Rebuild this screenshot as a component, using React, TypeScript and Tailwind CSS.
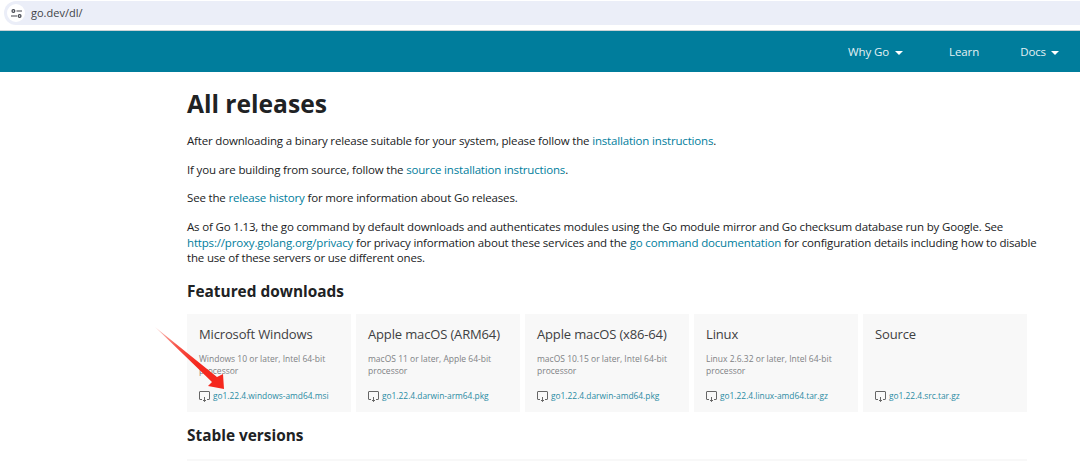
const downloads = [
  { title: "Microsoft Windows", note: "Windows 10 or later, Intel 64-bit processor", file: "go1.22.4.windows-amd64.msi" },
  { title: "Apple macOS (ARM64)", note: "macOS 11 or later, Apple 64-bit processor", file: "go1.22.4.darwin-arm64.pkg" },
  { title: "Apple macOS (x86-64)", note: "macOS 10.15 or later, Intel 64-bit processor", file: "go1.22.4.darwin-amd64.pkg" },
  { title: "Linux", note: "Linux 2.6.32 or later, Intel 64-bit processor", file: "go1.22.4.linux-amd64.tar.gz" },
  { title: "Source", note: "", file: "go1.22.4.src.tar.gz" },
];

function Caret() {
  return <span className="ml-[6px] inline-block h-0 w-0 border-x-[4px] border-t-[4px] border-x-transparent border-t-white align-middle" />;
}

function DownloadIcon() {
  return (
    <svg width="11" height="11" viewBox="0 0 11 11" fill="none" stroke="#666" strokeWidth="1" className="shrink-0">
      <path d="M3 8.5H1a.5.5 0 0 1-.5-.5V1A.5.5 0 0 1 1 .5h9a.5.5 0 0 1 .5.5v7a.5.5 0 0 1-.5.5H8" />
      <path d="M5.5 6v4.5M4 9l1.5 1.5L7 9" />
    </svg>
  );
}

function SiteIcon() {
  return (
    <svg width="11" height="9" viewBox="0 0 11 9" fill="none" stroke="#44474f" strokeWidth="1.2">
      <circle cx="2.4" cy="2" r="1.4" />
      <path d="M5.5 2H11M0 7h6" />
      <circle cx="8.6" cy="7" r="1.4" />
    </svg>
  );
}

function Link({ children }: { children: React.ReactNode }) {
  return <a className="text-[#007d9c]">{children}</a>;
}

export default function App() {
  return (
    <div className="relative h-[461px] w-[1080px] overflow-hidden bg-white font-['Open_Sans',sans-serif] text-[#202224]">
      <div className="pt-px pl-1">
        <div className="flex h-6 items-center rounded-l-xl bg-[#ebeef8] pl-[3px]">
          <div className="flex h-[18px] w-[18px] items-center justify-center rounded-full bg-white">
            <SiteIcon />
          </div>
          <span className="ml-[6px] text-[11px] text-[#3f4347]">go.dev/dl/</span>
        </div>
      </div>
      <div className="mt-[5px] flex h-[42px] items-center justify-end border-t border-[#c9d3d6] bg-[#007d9c] pr-[21px] text-[11.5px] tracking-[-0.1px] text-[#e4f1f4]">
        <span>Why Go<Caret /></span>
        <span className="ml-[46px]">Learn</span>
        <span className="ml-[41px]">Docs<span className="ml-[-1px]"><Caret /></span></span>
      </div>

      <main className="pl-[187px] pr-[40px]">
        <h1 className="mt-[14px] text-[24.6px] leading-[36px] font-bold text-[#202224]">All releases</h1>
        <div className="text-[11.5px] leading-[16px] tracking-[-0.17px]">
          <p className="mt-[11px]">After downloading a binary release suitable for your system, please follow the <Link>installation instructions</Link>.</p>
          <p className="mt-[13px]">If you are building from source, follow the <Link>source installation instructions</Link>.</p>
          <p className="mt-[12px]">See the <Link>release history</Link> for more information about Go releases.</p>
          <p className="mt-[13px] w-[860px] leading-[15.5px]">As of Go 1.13, the go command by default downloads and authenticates modules using the Go module mirror and Go checksum database run by Google. See <Link>https://proxy.golang.org/privacy</Link> for privacy information about these services and the <Link>go command documentation</Link> for configuration details including how to disable the use of these servers or use different ones.</p>
        </div>
        <h2 className="mt-[15px] text-[15.4px] leading-[22px] font-bold">Featured downloads</h2>
        <div className="mt-[11.5px] flex gap-[5px]">
          {downloads.map((d) => (
            <div key={d.title} className="flex h-[98px] w-[164px] flex-col bg-[#f8f8f8] px-3 pt-[10px] pb-[10px]">
              <div className="text-[13px] leading-[20px] tracking-[-0.15px] text-[#3e4042]">{d.title}</div>
              <div className="mt-[9px] h-[24px] text-[8.5px] leading-[12px] text-[#808285]">{d.note}</div>
              <div className="mt-auto flex items-center gap-[3px] text-[8.4px] leading-[12px] text-[#2a8ba3]">
                <DownloadIcon />
                <span>{d.file}</span>
              </div>
            </div>
          ))}
        </div>
        <h2 className="mt-[13px] text-[15.4px] leading-[22px] font-bold">Stable versions</h2>
      </main>
      <div className="absolute bottom-0 left-[187px] h-[2px] w-[840px] bg-[#f8f8f8]" />

      <svg className="absolute top-[324px] left-[154px]" width="72" height="68" viewBox="0 0 72 68">
        <defs>
          <linearGradient id="arrowFill" x1="0" y1="0" x2="1" y2="1">
            <stop offset="0" stopColor="#fbd5d0" />
            <stop offset="0.3" stopColor="#f7574c" />
            <stop offset="0.6" stopColor="#f5281e" />
          </linearGradient>
        </defs>
        <path d="M1 3 L63 53 L69 50 L70 65 L54 62 L58 58 Z" fill="url(#arrowFill)" />
      </svg>
    </div>
  );
}
